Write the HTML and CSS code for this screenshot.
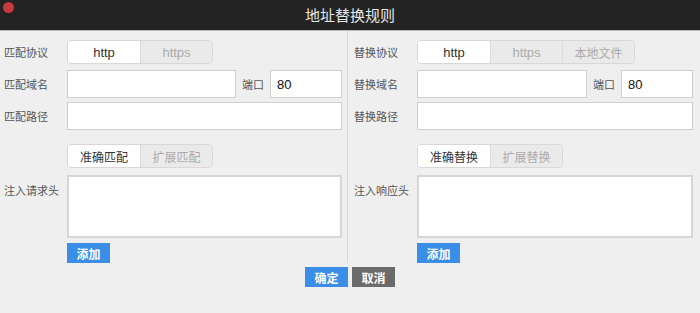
FILE: index.html
```html
<!DOCTYPE html>
<html lang="zh-CN">
<head>
<meta charset="utf-8">
<title>地址替换规则</title>
<link rel="stylesheet" href="styles.css">
</head>
<body>
<div class="window">
  <header class="titlebar">
    <span class="close-dot"></span>
    <span class="title">地址替换规则</span>
  </header>
  <div class="panes">
    <section class="pane pane-left">
      <div class="row row-proto">
        <label class="lbl">匹配协议</label>
        <div class="seg">
          <span class="opt active">http</span>
          <span class="opt">https</span>
        </div>
      </div>
      <div class="row row-domain">
        <label class="lbl">匹配域名</label>
        <div class="domain">
          <input class="inp grow" type="text">
          <span class="port-lbl">端口</span>
          <input class="inp port" type="text" value="80">
        </div>
      </div>
      <div class="row row-path">
        <label class="lbl">匹配路径</label>
        <input class="inp" type="text">
      </div>
      <div class="row row-mode">
        <span class="lbl"></span>
        <div class="seg">
          <span class="opt active cjk">准确匹配</span>
          <span class="opt cjk">扩展匹配</span>
        </div>
      </div>
      <div class="row row-head">
        <label class="lbl lbl-top">注入请求头</label>
        <textarea class="area"></textarea>
      </div>
      <div class="row row-add">
        <span class="lbl"></span>
        <div><button class="btn btn-blue">添加</button></div>
      </div>
    </section>
    <section class="pane pane-right">
      <div class="row row-proto">
        <label class="lbl">替换协议</label>
        <div class="seg">
          <span class="opt active">http</span>
          <span class="opt">https</span>
          <span class="opt cjk">本地文件</span>
        </div>
      </div>
      <div class="row row-domain">
        <label class="lbl">替换域名</label>
        <div class="domain">
          <input class="inp grow" type="text">
          <span class="port-lbl">端口</span>
          <input class="inp port" type="text" value="80">
        </div>
      </div>
      <div class="row row-path">
        <label class="lbl">替换路径</label>
        <input class="inp" type="text">
      </div>
      <div class="row row-mode">
        <span class="lbl"></span>
        <div class="seg">
          <span class="opt active cjk">准确替换</span>
          <span class="opt cjk">扩展替换</span>
        </div>
      </div>
      <div class="row row-head">
        <label class="lbl lbl-top">注入响应头</label>
        <textarea class="area"></textarea>
      </div>
      <div class="row row-add">
        <span class="lbl"></span>
        <div><button class="btn btn-blue">添加</button></div>
      </div>
    </section>
  </div>
  <div class="actions">
    <button class="btn btn-blue">确定</button>
    <button class="btn btn-gray">取消</button>
  </div>
</div>
</body>
</html>
```
FILE: styles.css
```css
* { box-sizing: border-box; }
html, body {
  margin: 0;
  padding: 0;
  width: 700px;
  height: 313px;
  overflow: hidden;
  background: #efefef;
  font-family: "Liberation Sans", "Noto Sans CJK SC", sans-serif;
}
.window {
  width: 700px;
  height: 313px;
  background: #efefef;
}
.titlebar {
  position: relative;
  height: 31px;
  background: #232323;
  border-bottom: 1px solid #b9b9b9;
  display: flex;
  align-items: center;
  justify-content: center;
}
.close-dot {
  position: absolute;
  left: 3px;
  top: 2px;
  width: 11px;
  height: 11px;
  border-radius: 50%;
  background: #c8393b;
}
.title {
  color: #e6e6e6;
  font-family: "Noto Sans CJK SC", sans-serif;
  font-size: 15px;
  line-height: 30px;
}
.panes {
  display: flex;
  height: 232px;
}
.pane {
  padding-top: 9px;
}
.pane-left {
  width: 348px;
  padding-left: 4px;
  padding-right: 5px;
  border-right: 1px solid #d9d9d9;
}
.pane-right {
  width: 352px;
  padding-left: 6px;
  padding-right: 7px;
}
.row {
  display: grid;
  grid-template-columns: 63px 1fr;
  align-items: center;
}
.lbl {
  font-family: "Noto Sans CJK SC", sans-serif;
  font-size: 11px;
  color: #555;
  white-space: nowrap;
}
.lbl-top { align-self: start; padding-top: 7px; }
.row-domain { margin-top: 6px; }
.row-path { margin-top: 4px; }
.row-mode { margin-top: 14px; }
.row-head { margin-top: 7px; }
.row-add { margin-top: 5px; }
.seg {
  display: flex;
  height: 24px;
  border: 1px solid #d8d8d8;
  border-radius: 4px;
  overflow: hidden;
  width: max-content;
  background: #e9e9e9;
}
.opt {
  width: 72px;
  display: flex;
  align-items: center;
  justify-content: center;
  font-size: 13px;
  color: #aaa;
  background: #eaeaea;
  border-left: 1px solid #dcdcdc;
}
.opt:first-child { border-left: none; }
.opt.active { background: #fff; color: #333; }
.opt.cjk { font-family: "Noto Sans CJK SC", sans-serif; font-size: 12px; }
.domain {
  display: flex;
  align-items: center;
}
.inp {
  height: 28px;
  border: 1px solid #cfcfcf;
  background: #fff;
  margin: 0;
  padding: 0 6px;
  font-family: "Liberation Sans", sans-serif;
  font-size: 13px;
  color: #111;
  outline: none;
  border-radius: 0;
  width: 100%;
}
.grow { flex: 1; min-width: 0; }
.port-lbl {
  font-family: "Noto Sans CJK SC", sans-serif;
  font-size: 11px;
  color: #555;
  margin: 0 6px;
  white-space: nowrap;
}
.inp.port { width: 72px; flex: none; }
.area {
  height: 63px;
  border: 2px solid #d6d6d6;
  background: #fff;
  resize: none;
  margin: 0;
  width: 100%;
  outline: none;
  border-radius: 0;
}
.btn {
  width: 43px;
  height: 20px;
  border: none;
  margin: 0;
  padding: 0;
  color: #fff;
  font-family: "Noto Sans CJK SC", sans-serif;
  font-size: 12px;
  font-weight: bold;
  border-radius: 0;
}
.btn-blue { background: #3a8ee8; }
.btn-gray { background: #6b6b6b; }
.actions {
  display: flex;
  justify-content: center;
  gap: 4px;
  margin-top: 4px;
}
```
